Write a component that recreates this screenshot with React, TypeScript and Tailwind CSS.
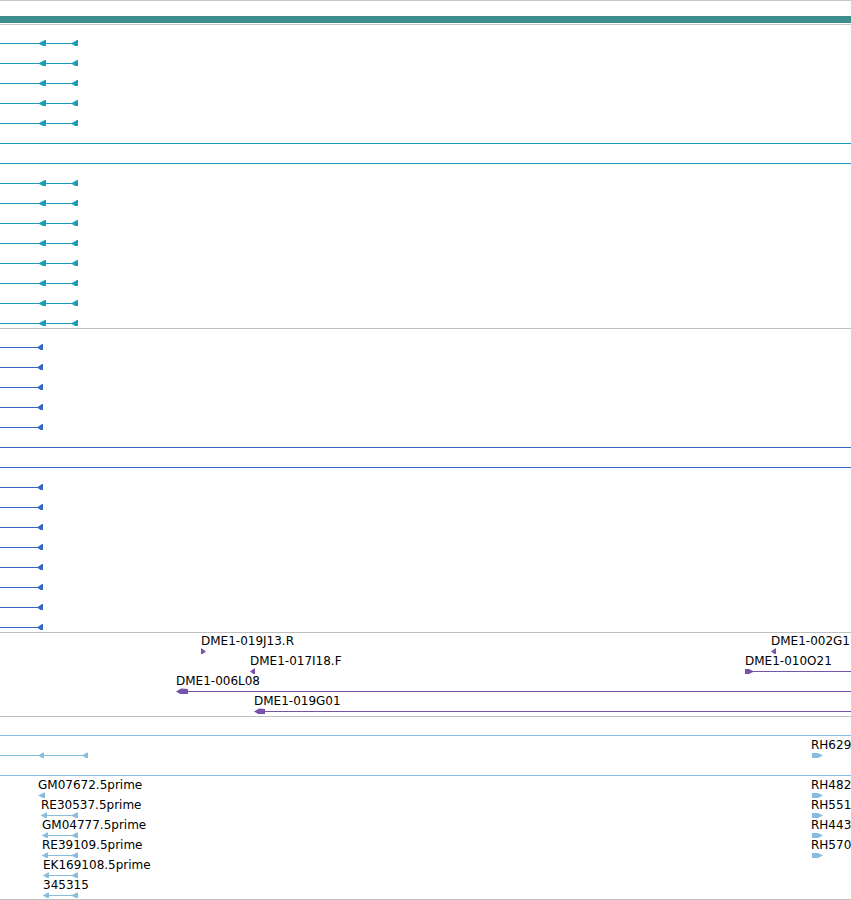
import React from 'react';

// colours of the feature tracks
const TEAL = '#1a9cba';
const BLUE = '#3468c4';
const PURPLE = '#7654a8';
const SKY = '#88bde0';

type Row = {
  lines?: [number, number][];
  shapes?: string[];
  labels?: [number, string][];
};

// arrowheads, drawn in a 20px row whose feature line sits on y = 17
const leftHead = (x: number, w = 7) =>
  `${x},17.5 ${x + w - 1},14 ${x + w},14 ${x + w},21 ${x + w - 1},21`;
const leftTri = (x: number, w = 5) => `${x},17.5 ${x + w},14 ${x + w},21`;
const rightTri = (x: number, w = 5) => `${x},14 ${x + w},17.5 ${x},21`;
const leftThick = (x: number, w = 12) =>
  `${x},17.5 ${x + 5},14.5 ${x + w},15 ${x + w},20 ${x + 5},20.5`;
const rightThick = (x: number, w = 11) =>
  `${x},15 ${x + w - 5},15 ${x + w},17.5 ${x + w - 5},20 ${x},20`;
const smallLeft = (x: number, w = 7) =>
  `${x},17.5 ${x + w - 1},14.5 ${x + w},14.5 ${x + w},20.5 ${x + w - 1},20.5`;

const full: Row = { lines: [[0, 851]] };

const tealPair: Row = { lines: [[0, 78]], shapes: [leftHead(38, 8), leftHead(71, 7)] };
const bluePair: Row = { lines: [[0, 43]], shapes: [leftHead(37, 6)] };

const tealRows: Row[] = [
  ...Array(5).fill(tealPair),
  full,
  full,
  ...Array(8).fill(tealPair),
];

const blueRows: Row[] = [
  ...Array(5).fill(bluePair),
  full,
  full,
  ...Array(8).fill(bluePair),
];

const purpleRows: Row[] = [
  {
    shapes: [rightTri(201, 5), leftTri(771, 5)],
    labels: [
      [201, 'DME1-019J13.R'],
      [771, 'DME1-002G1'],
    ],
  },
  {
    lines: [[753, 851]],
    shapes: [leftTri(250, 5), rightThick(745, 9)],
    labels: [
      [250, 'DME1-017I18.F'],
      [745, 'DME1-010O21'],
    ],
  },
  {
    lines: [[180, 851]],
    shapes: [leftThick(176, 12)],
    labels: [[176, 'DME1-006L08']],
  },
  {
    lines: [[258, 851]],
    shapes: [leftThick(254, 11)],
    labels: [[254, 'DME1-019G01']],
  },
];

const skyPair = (x: number): string[] => [smallLeft(x, 6), smallLeft(71, 7)];

const skyRows: Row[] = [
  full,
  {
    lines: [[0, 87]],
    shapes: [smallLeft(38, 6), smallLeft(82, 6), rightThick(812, 11)],
    labels: [[811, 'RH629']],
  },
  full,
  {
    shapes: [smallLeft(38, 7), rightThick(812, 11)],
    labels: [
      [38, 'GM07672.5prime'],
      [811, 'RH482'],
    ],
  },
  {
    lines: [[41, 78]],
    shapes: [...skyPair(41), rightThick(812, 11)],
    labels: [
      [41, 'RE30537.5prime'],
      [811, 'RH551'],
    ],
  },
  {
    lines: [[42, 78]],
    shapes: [...skyPair(42), rightThick(812, 11)],
    labels: [
      [42, 'GM04777.5prime'],
      [811, 'RH443'],
    ],
  },
  {
    lines: [[42, 78]],
    shapes: [...skyPair(42), rightThick(812, 11)],
    labels: [
      [42, 'RE39109.5prime'],
      [811, 'RH570'],
    ],
  },
  {
    lines: [[43, 78]],
    shapes: skyPair(43),
    labels: [[43, 'EK169108.5prime']],
  },
  {
    lines: [[43, 78]],
    shapes: skyPair(43),
    labels: [[43, '345315']],
  },
];

function FeatureRow({ row, color }: { row: Row; color: string }) {
  return (
    <div className="relative h-5">
      <svg className="absolute inset-0" width={851} height={20}>
        {row.lines?.map(([x1, x2], i) => (
          <line key={i} x1={x1} x2={x2} y1={17.5} y2={17.5} stroke={color} strokeWidth={1} />
        ))}
        {row.shapes?.map((p, i) => (
          <polygon key={i} points={p} fill={color} />
        ))}
      </svg>
      {row.labels?.map(([x, text], i) => (
        <span
          key={i}
          className="absolute top-0 whitespace-nowrap text-[12px] leading-[14px] text-black"
          style={{ left: x }}
        >
          {text}
        </span>
      ))}
    </div>
  );
}

function Track({ rows, color, height }: { rows: Row[]; color: string; height: string }) {
  return (
    <div className={`flex flex-col pt-px ${height}`}>
      {rows.map((row, i) => (
        <FeatureRow key={i} row={row} color={color} />
      ))}
    </div>
  );
}

export default function App() {
  return (
    <div className="relative h-[900px] w-[851px] overflow-hidden bg-white font-['DejaVu_Sans',sans-serif]">
      {/* Ruler / overview bar */}
      <div className="h-px bg-[#c4c4c4]" />
      <div className="mt-[15px] h-[7px] bg-[#3e8e8e]" />
      <div className="mt-px h-px bg-[#c4c4c4]" />

      <div className="h-[303px]">
        <Track rows={tealRows} color={TEAL} height="h-[303px]" />
      </div>
      <div className="h-px bg-[#c0c0c0]" />

      <div className="h-[303px]">
        <Track rows={blueRows} color={BLUE} height="h-[303px]" />
      </div>
      <div className="h-px bg-[#c0c0c0]" />

      <div className="h-[83px]">
        <Track rows={purpleRows} color={PURPLE} height="h-[83px]" />
      </div>
      <div className="h-px bg-[#c0c0c0]" />

      <div className="h-[182px]">
        <Track rows={skyRows} color={SKY} height="h-[182px]" />
      </div>
      <div className="h-px bg-[#c0c0c0]" />
    </div>
  );
}
